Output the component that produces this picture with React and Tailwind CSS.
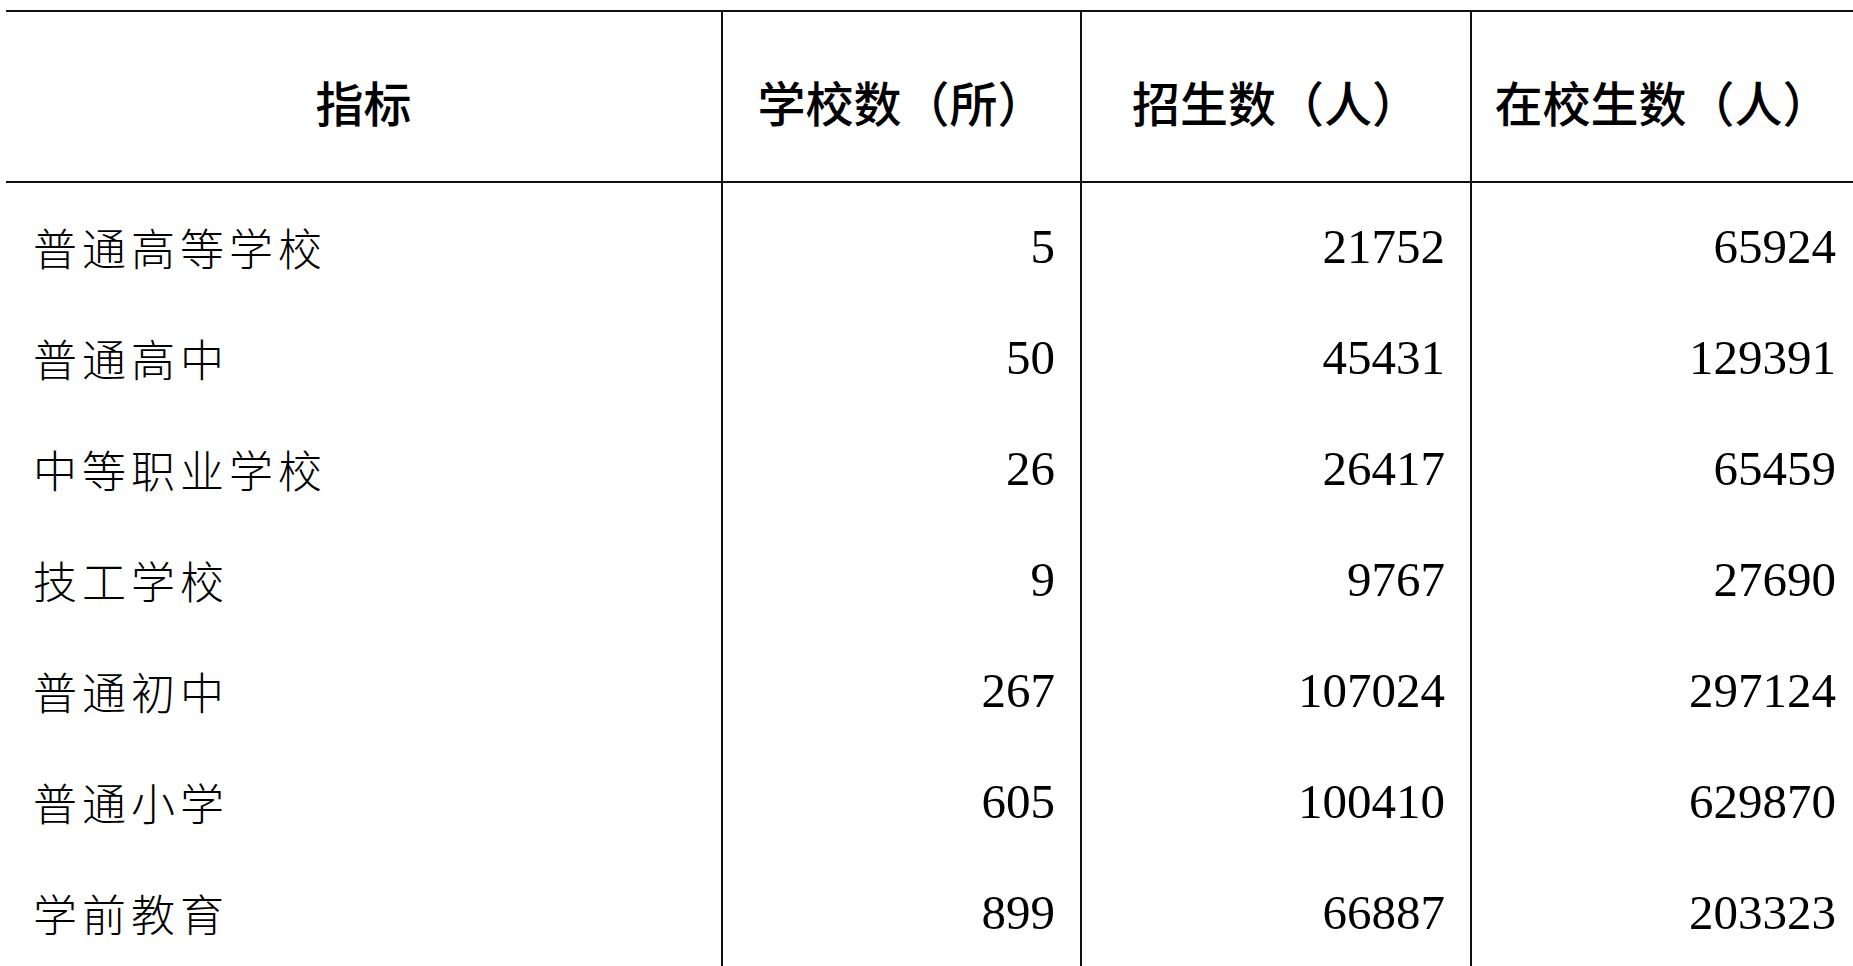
import React from "react";

const rows = [
  ["普通高等学校", "5", "21752", "65924"],
  ["普通高中", "50", "45431", "129391"],
  ["中等职业学校", "26", "26417", "65459"],
  ["技工学校", "9", "9767", "27690"],
  ["普通初中", "267", "107024", "297124"],
  ["普通小学", "605", "100410", "629870"],
  ["学前教育", "899", "66887", "203323"],
];

const headers = ["指标", "学校数（所）", "招生数（人）", "在校生数（人）"];

export default function App() {
  return (
    <div className="h-screen overflow-hidden bg-white pt-[10px] pl-[6px] text-black">
      <div className="grid grid-cols-[715px_359px_390px_1fr] border-t-2 border-[#111]">
        {headers.map((h, i) => (
          <div
            key={h}
            className={`h-[171px] border-b-2 border-[#111] flex items-center justify-center pt-2 font-['Noto_Sans_CJK_SC','Noto_Sans',sans-serif] text-[48px] font-medium leading-none whitespace-nowrap ${
              i > 0 ? "border-l-2" : ""
            }`}
          >
            {h}
          </div>
        ))}

        {rows.map((r, ri) => (
          <React.Fragment key={r[0]}>
            <div
              className={`flex items-center pl-[27px] font-['Noto_Sans_CJK_SC','Noto_Sans',sans-serif] text-[44px] font-light tracking-[5px] leading-none whitespace-nowrap ${
                ri === 0 ? "h-[119px] pt-[8px]" : "h-[111px]"
              }`}
            >
              {r[0]}
            </div>
            {r.slice(1).map((v, ci) => (
              <div
                key={ci}
                className={`flex items-center justify-end border-l-2 border-[#111] font-['Liberation_Serif','Times_New_Roman',serif] text-[49px] leading-none ${
                  ci === 2 ? "pr-[17px]" : "pr-[25px]"
                } ${ri === 0 ? "h-[119px] pt-[8px]" : "h-[111px]"}`}
              >
                {v}
              </div>
            ))}
          </React.Fragment>
        ))}
      </div>
    </div>
  );
}
